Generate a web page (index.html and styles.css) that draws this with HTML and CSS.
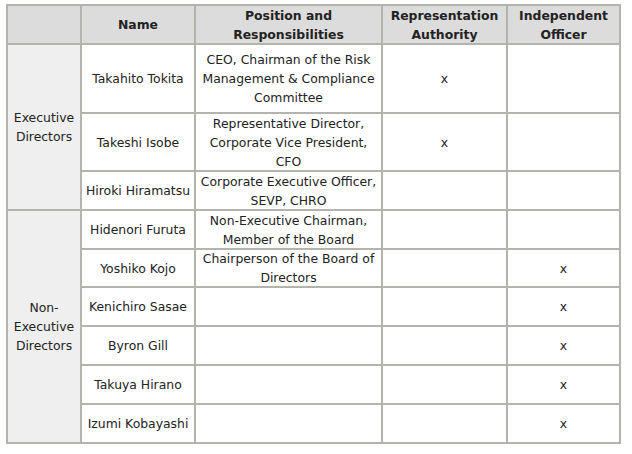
FILE: index.html
```html
<!DOCTYPE html>
<html lang="en">
<head>
<meta charset="utf-8">
<title>Board of Directors</title>
<link rel="stylesheet" href="styles.css">
</head>
<body>
<table class="board">
  <thead>
    <tr class="h-head">
      <th class="c1 grp"></th>
      <th class="c2">Name</th>
      <th class="c3"><span class="ml">Position and<br>Responsibilities</span></th>
      <th class="c4"><span class="ml">Representation<br>Authority</span></th>
      <th class="c5"><span class="ml">Independent<br>Officer</span></th>
    </tr>
  </thead>
  <tbody>
    <tr class="h-69">
      <td class="grp" rowspan="3">Executive<br>Directors</td>
      <td>Takahito Tokita</td>
      <td><span class="ml">CEO, Chairman of the Risk<br>Management &amp; Compliance<br>Committee</span></td>
      <td>x</td>
      <td></td>
    </tr>
    <tr class="h-58">
      <td>Takeshi Isobe</td>
      <td><span class="ml">Representative Director,<br>Corporate Vice President,<br>CFO</span></td>
      <td>x</td>
      <td></td>
    </tr>
    <tr class="h-39">
      <td>Hiroki Hiramatsu</td>
      <td><span class="ml">Corporate Executive Officer,<br>SEVP, CHRO</span></td>
      <td></td>
      <td></td>
    </tr>
    <tr class="h-39">
      <td class="grp" rowspan="7">Non-<br>Executive<br>Directors</td>
      <td>Hidenori Furuta</td>
      <td><span class="ml">Non-Executive Chairman,<br>Member of the Board</span></td>
      <td></td>
      <td></td>
    </tr>
    <tr class="h-38">
      <td>Yoshiko Kojo</td>
      <td><span class="ml">Chairperson of the Board of<br>Directors</span></td>
      <td></td>
      <td>x</td>
    </tr>
    <tr class="h-39">
      <td>Kenichiro Sasae</td>
      <td></td>
      <td></td>
      <td>x</td>
    </tr>
    <tr class="h-39">
      <td>Byron Gill</td>
      <td></td>
      <td></td>
      <td>x</td>
    </tr>
    <tr class="h-39">
      <td>Takuya Hirano</td>
      <td></td>
      <td></td>
      <td>x</td>
    </tr>
    <tr class="h-39">
      <td>Izumi Kobayashi</td>
      <td></td>
      <td></td>
      <td>x</td>
    </tr>
  </tbody>
</table>
</body>
</html>
```
FILE: styles.css
```css
html, body {
  margin: 0;
  padding: 0;
  background: #ffffff;
}

body {
  padding: 4px 0 0 6px;
  font-family: "DejaVu Sans", Verdana, sans-serif;
  font-size: 12.4px;
  line-height: 19px;
  color: #222222;
}

.board {
  border-collapse: separate;
  border-spacing: 0;
  table-layout: fixed;
  width: 615px;
  border-left: 2px solid #b4b4ac;
  border-top: 2px solid #b4b4ac;
}

.board th,
.board td {
  box-sizing: border-box;
  border-right: 2px solid #b4b4ac;
  border-bottom: 2px solid #b4b4ac;
  padding: 0;
  text-align: center;
  vertical-align: middle;
  white-space: nowrap;
  font-weight: normal;
}

.board th {
  background: #dcdcdc;
  font-weight: bold;
}

.board td.grp {
  background: #efefef;
}

.board th.grp {
  background: #dcdcdc;
}

.ml {
  display: block;
  margin: -1px 0;
}

.c1 { width: 74px; }
.c2 { width: 114px; }
.c3 { width: 187px; }
.c4 { width: 125px; }
.c5 { width: 113px; }

.h-head { height: 39px; }
.h-69 { height: 69px; }
.h-58 { height: 58px; }
.h-39 { height: 39px; }
.h-38 { height: 38px; }
```
